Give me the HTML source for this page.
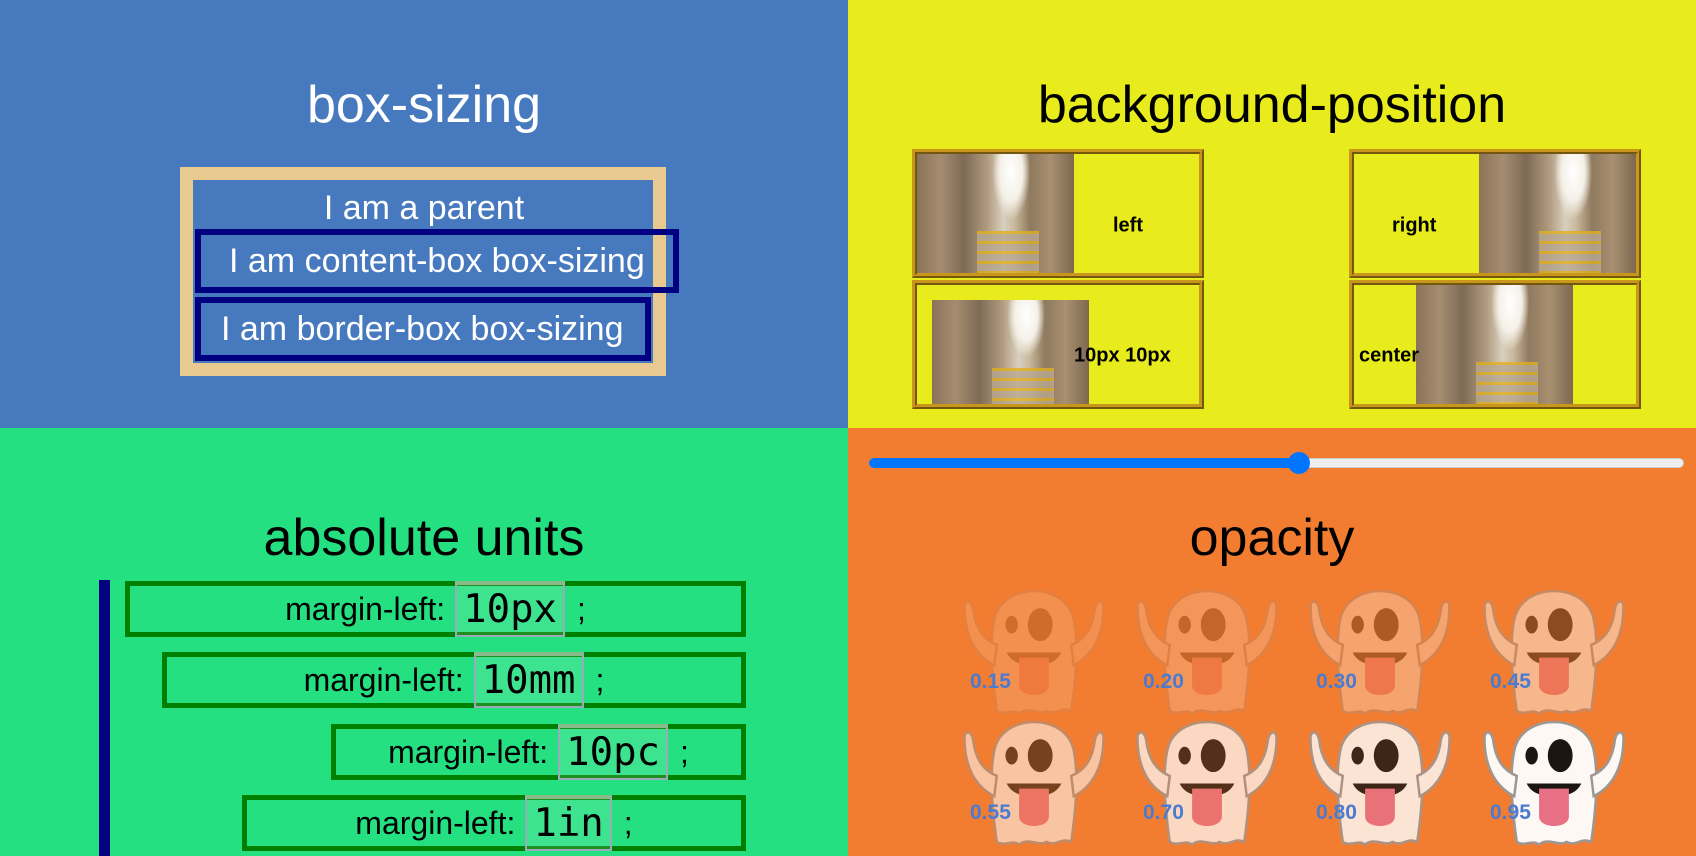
<!DOCTYPE html>
<html><head><meta charset="utf-8"><style>
*{margin:0;padding:0;box-sizing:border-box}
body{width:1696px;height:856px;overflow:hidden;font-family:"Liberation Sans",sans-serif;position:relative}
.q{position:absolute;width:848px;height:428px}
.a{position:absolute}
.t{position:absolute;width:848px;text-align:center;font-size:52px;left:0}
.pic{position:absolute;background:
radial-gradient(ellipse 12% 40% at 60% 15%,#fff 0,#f5f1e8 60%,rgba(0,0,0,0) 100%),
linear-gradient(90deg,#8a7358 0%,#a58d70 15%,#7e6a55 30%,#b29c80 45%,#d8d0c0 55%,#c9b89c 62%,#8f7a60 72%,#a89070 85%,#7d6850 100%);}
.pic:after{content:"";position:absolute;left:38%;right:22%;bottom:0;height:35%;background:repeating-linear-gradient(180deg,#e0b020 0 3px,#b8a890 3px 10px);opacity:.8}
.bp{position:absolute;width:292px;height:129px;border:5px ridge #c8961a;background:#e9ec1c;overflow:hidden}
.bp span{position:absolute;font-weight:bold;font-size:20px;color:#000}
.row{position:absolute;height:56px;border:5px solid #008000;font-size:32px;display:flex;align-items:center;justify-content:center;color:#000}
.row code{font-family:"DejaVu Sans Mono","Liberation Mono",monospace;font-size:39px;background:rgba(255,255,255,.12);border:2px solid #9ab;border-top:4px solid #8b8;padding:0 6px;margin:0 12px 0 10px;height:56px;line-height:50px}
.g{position:absolute;width:144px;height:132px}
.g span{position:absolute;left:8px;top:86px;font-weight:bold;font-size:21px;color:#4a7bd0}
</style></head><body>
<div class="q" style="left:0;top:0;background:#4779bf">
<div class="t" style="top:75px;color:#fff">box-sizing</div>
<div class="a" style="left:180px;top:167px;width:486px;height:209px;border:13px solid #e8c990"></div>
<div class="a" style="left:0;top:189px;width:848px;text-align:center;color:#fff;font-size:34px">I am a parent</div>
<div class="a" style="left:195px;top:229px;width:484px;height:64px;border:6px solid #000080;color:#fff;font-size:34px;padding-left:28px;line-height:52px;white-space:nowrap">I am content-box box-sizing</div>
<div class="a" style="left:195px;top:297px;width:456px;height:64px;border:6px solid #000080;color:#fff;font-size:34px;padding-left:20px;line-height:52px;white-space:nowrap">I am border-box box-sizing</div>
</div>
<div class="q" style="left:848px;top:0;background:#e9ec1c">
<div class="t" style="top:75px;color:#000">background-position</div>
</div>
<div class="bp" style="left:912px;top:149px"><div class="pic" style="left:0;top:0;width:157px;height:119px"></div><span style="left:196px;top:72px;transform:translateY(-50%)">left</span></div>
<div class="bp" style="left:1349px;top:149px"><div class="pic" style="right:0;top:0;width:157px;height:119px"></div><span style="left:38px;top:72px;transform:translateY(-50%)">right</span></div>
<div class="bp" style="left:912px;top:280px"><div class="pic" style="left:15px;top:15px;width:157px;height:104px"></div><span style="left:157px;top:71px;transform:translateY(-50%)">10px 10px</span></div>
<div class="bp" style="left:1349px;top:280px"><div class="pic" style="left:62px;top:0;width:157px;height:119px"></div><span style="left:5px;top:71px;transform:translateY(-50%)">center</span></div>
<div class="q" style="left:0;top:428px;background:#24e081">
<div class="t" style="top:80px;color:#000">absolute units</div>
<div class="a" style="left:99px;top:152px;width:11px;height:276px;background:#000080"></div>
</div>
<div class="row" style="left:125px;top:581px;width:621px">margin-left:<code>10px</code>;</div>
<div class="row" style="left:162px;top:652px;width:584px">margin-left:<code>10mm</code>;</div>
<div class="row" style="left:331px;top:724px;width:415px">margin-left:<code>10pc</code>;</div>
<div class="row" style="left:242px;top:795px;width:504px">margin-left:<code>1in</code>;</div>
<div class="q" style="left:848px;top:428px;background:#f27c30">
<div class="a" style="left:21px;top:30px;width:815px;height:10px;border-radius:5px;background:#efefef;border:1px solid #ccc"></div>
<div class="a" style="left:21px;top:30px;width:430px;height:10px;border-radius:5px;background:#0075ff"></div>
<div class="a" style="left:440px;top:24px;width:22px;height:22px;border-radius:50%;background:#0075ff"></div>
<div class="t" style="top:80px;color:#000">opacity</div>
</div>
<svg width="0" height="0" style="position:absolute"><defs>
<g id="gh">
<path d="M40 108 C36 80 34 55 38 36 C44 6 96 6 102 36 C106 55 104 80 100 108 C92 104 88 112 80 108 C74 112 66 104 58 110 C52 106 46 112 40 108Z" fill="#fff" stroke="#999" stroke-width="2"/>
<path d="M38 72 C22 64 14 48 14 26 C14 20 20 20 21 28 C23 44 30 52 40 56Z" fill="#fff" stroke="#999" stroke-width="2"/>
<path d="M102 72 C118 64 126 48 126 26 C126 20 120 20 119 28 C117 44 110 52 100 56Z" fill="#fff" stroke="#999" stroke-width="2"/>
<ellipse cx="52" cy="40" rx="5" ry="7" fill="#111"/>
<ellipse cx="75" cy="40" rx="10" ry="13" fill="#111"/>
<path d="M48 62 L92 62 C88 70 80 72 70 72 C60 72 52 70 48 62Z" fill="#111"/>
<path d="M58 66 L82 66 L82 88 C82 98 58 98 58 88Z" fill="#e8708a"/>
</g></defs></svg>
<div class="g" style="left:962px;top:584px;"><svg width="144" height="132" viewBox="12 8 116 104" preserveAspectRatio="none" style="opacity:.15"><use href="#gh"/></svg><span>0.15</span></div>
<div class="g" style="left:1135px;top:584px;"><svg width="144" height="132" viewBox="12 8 116 104" preserveAspectRatio="none" style="opacity:.2"><use href="#gh"/></svg><span>0.20</span></div>
<div class="g" style="left:1308px;top:584px;"><svg width="144" height="132" viewBox="12 8 116 104" preserveAspectRatio="none" style="opacity:.3"><use href="#gh"/></svg><span>0.30</span></div>
<div class="g" style="left:1482px;top:584px;"><svg width="144" height="132" viewBox="12 8 116 104" preserveAspectRatio="none" style="opacity:.45"><use href="#gh"/></svg><span>0.45</span></div>
<div class="g" style="left:962px;top:715px;"><svg width="144" height="132" viewBox="12 8 116 104" preserveAspectRatio="none" style="opacity:.55"><use href="#gh"/></svg><span>0.55</span></div>
<div class="g" style="left:1135px;top:715px;"><svg width="144" height="132" viewBox="12 8 116 104" preserveAspectRatio="none" style="opacity:.7"><use href="#gh"/></svg><span>0.70</span></div>
<div class="g" style="left:1308px;top:715px;"><svg width="144" height="132" viewBox="12 8 116 104" preserveAspectRatio="none" style="opacity:.8"><use href="#gh"/></svg><span>0.80</span></div>
<div class="g" style="left:1482px;top:715px;"><svg width="144" height="132" viewBox="12 8 116 104" preserveAspectRatio="none" style="opacity:.95"><use href="#gh"/></svg><span>0.95</span></div>
</body></html>
